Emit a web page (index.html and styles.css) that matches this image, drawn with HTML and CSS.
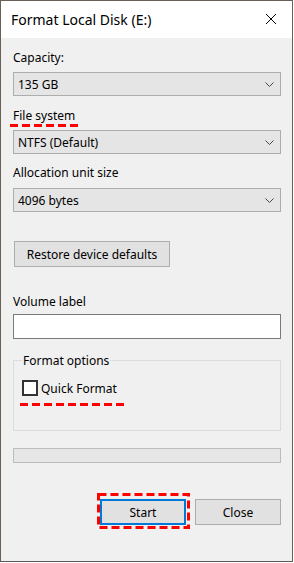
FILE: index.html
```html
<!DOCTYPE html>
<html lang="en">
<head>
  <meta charset="UTF-8">
  <title>Format Local Disk (E:)</title>
  <link rel="stylesheet" href="styles.css">
</head>
<body>

  <div class="window">
    <div class="titlebar">
      <span class="title">Format Local Disk (E:)</span>
      <svg class="close" width="12" height="12" viewBox="0 0 12 12">
        <path d="M1 1 L11 11 M11 1 L1 11" stroke="#000" stroke-width="1" fill="none"/>
      </svg>
    </div>

    <div class="content">
      <div class="label first">Capacity:</div>
      <div class="select">
        <span>135 GB</span>
        <svg class="chev" width="9" height="5" viewBox="0 0 9 5"><path d="M0.5 0.5 L4.5 4.5 L8.5 0.5" stroke="#444" fill="none"/></svg>
      </div>

      <div class="label mark">
        File system
        <svg class="dash-line" width="70" height="3" viewBox="0 0 70 3"><line x1="0" y1="1.5" x2="70" y2="1.5" stroke="#f00" stroke-width="3" stroke-dasharray="8 4"/></svg>
      </div>
      <div class="select">
        <span>NTFS (Default)</span>
        <svg class="chev" width="9" height="5" viewBox="0 0 9 5"><path d="M0.5 0.5 L4.5 4.5 L8.5 0.5" stroke="#444" fill="none"/></svg>
      </div>

      <div class="label alloc">Allocation unit size</div>
      <div class="select sel3">
        <span>4096 bytes</span>
        <svg class="chev" width="9" height="5" viewBox="0 0 9 5"><path d="M0.5 0.5 L4.5 4.5 L8.5 0.5" stroke="#444" fill="none"/></svg>
      </div>

      <button class="btn restore">Restore device defaults</button>

      <div class="label volume">Volume label</div>
      <div class="textbox"></div>

      <div class="group">
        <span class="legend">Format options</span>
        <div class="check-row">
          <span class="checkbox"></span>
          <span>Quick Format</span>
          <svg class="dash-line quick" width="106" height="3" viewBox="0 0 106 3"><line x1="0" y1="1.5" x2="106" y2="1.5" stroke="#f00" stroke-width="3" stroke-dasharray="8 4"/></svg>
        </div>
      </div>

      <div class="progress"></div>

      <div class="actions">
        <div class="start-wrap">
          <button class="btn start">Start</button>
          <svg class="dash-box" width="93" height="36" viewBox="0 0 93 36"><rect x="1.5" y="1.5" width="90" height="33" stroke="#f00" stroke-width="3" fill="none" stroke-dasharray="8 4"/></svg>
        </div>
        <button class="btn close-btn">Close</button>
      </div>
    </div>
  </div>

</body>
</html>
```

FILE: styles.css
```css
body {
  margin: 0;
  background-color: #ffffff;
  font-family: "Noto Sans", "Open Sans", sans-serif;
  font-size: 12px;
  color: #000;
}

.window {
  width: 291px;
  height: 560px;
  border: 1px solid #6b5e52;
  border-bottom-color: #5a5a5a;
  background-color: #f0f0f0;
  display: flex;
  flex-direction: column;
}

.titlebar {
  height: 37px;
  background-color: #ffffff;
  display: flex;
  align-items: center;
  justify-content: space-between;
  padding: 0 15px 0 10px;
}

.title {
  font-size: 14px;
  margin-top: -1px;
}

.close {
  margin-top: -1px;
}

.content {
  padding: 12px 11px 0 12px;
}

.label {
  height: 16px;
  line-height: 16px;
  margin-top: 12px;
}

.label.first {
  margin-top: 0;
}

.label.alloc {
  margin-top: 11px;
}

.label.volume {
  margin-top: 27px;
}

.mark {
  position: relative;
}

.dash-line {
  position: absolute;
  display: block;
  left: -3px;
  top: 16px;
}

.select {
  margin-top: 6px;
  height: 22px;
  border: 1px solid #adadad;
  background-color: #e5e5e5;
  display: flex;
  align-items: center;
  justify-content: space-between;
  padding: 0 6px 0 4px;
}

.select.sel3 {
  margin-top: 7px;
}

.chev {
  display: block;
}

.btn {
  font-family: inherit;
  font-size: 12px;
  color: #000;
  background-color: #e1e1e1;
  border: 1px solid #adadad;
  padding: 0;
  height: 26px;
  display: block;
}

.restore {
  margin: 29px 0 0 1px;
  width: 156px;
}

.textbox {
  margin-top: 4px;
  height: 23px;
  border: 1px solid #7a7a7a;
  background-color: #ffffff;
}

.group {
  margin-top: 21px;
  height: 69px;
  border: 1px solid #dcdcdc;
  padding: 0 8px;
}

.legend {
  display: block;
  width: fit-content;
  height: 16px;
  line-height: 16px;
  margin: -8px 0 0 0;
  padding: 0 1px;
  background-color: #f0f0f0;
}

.check-row {
  position: relative;
  margin-top: 11px;
  display: flex;
  align-items: center;
  gap: 3px;
  height: 16px;
}

.checkbox {
  width: 12px;
  height: 12px;
  border: 2px solid #333;
  background-color: #ffffff;
}

.dash-line.quick {
  left: -2px;
  top: 23px;
}

.progress {
  margin-top: 17px;
  height: 13px;
  border: 1px solid #bcbcbc;
  background-color: #e6e6e6;
}

.actions {
  margin-top: 36px;
  display: flex;
  justify-content: flex-end;
  gap: 9px;
}

.start-wrap {
  position: relative;
}

.start {
  width: 86px;
  border: 2px solid #0078d7;
}

.dash-box {
  position: absolute;
  left: -3px;
  top: -6px;
}

.close-btn {
  width: 86px;
}
```
